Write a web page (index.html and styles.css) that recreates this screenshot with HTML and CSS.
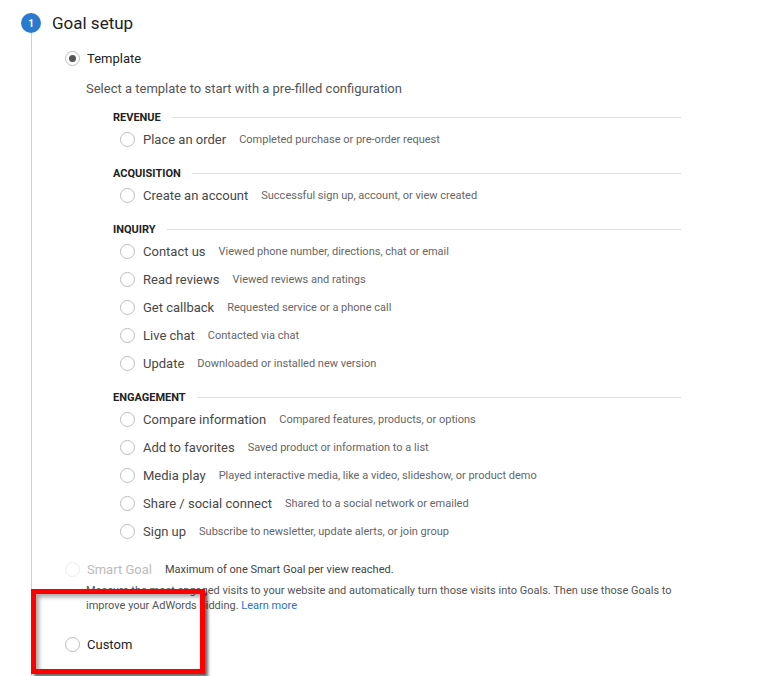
FILE: index.html
```html
<!DOCTYPE html>
<html lang="en">
<head>
  <meta charset="UTF-8">
  <title>Goal setup</title>
  <link rel="stylesheet" href="styles.css">
</head>
<body>
  <div class="page">
    <!-- step header -->
    <div class="step-head">
      <span class="step-num">1</span>
      <h1>Goal setup</h1>
    </div>

    <div class="step-body">
      <label class="option">
        <span class="radio checked"></span>
        <span class="option-name">Template</span>
      </label>
      <p class="hint">Select a template to start with a pre-filled configuration</p>

      <div class="groups">
        <section class="group">
          <h3>Revenue</h3>
          <div class="item"><span class="radio"></span><span class="item-name">Place an order</span><span class="item-desc">Completed purchase or pre-order request</span></div>
        </section>

        <section class="group">
          <h3>Acquisition</h3>
          <div class="item"><span class="radio"></span><span class="item-name">Create an account</span><span class="item-desc">Successful sign up, account, or view created</span></div>
        </section>

        <section class="group">
          <h3>Inquiry</h3>
          <div class="item"><span class="radio"></span><span class="item-name">Contact us</span><span class="item-desc">Viewed phone number, directions, chat or email</span></div>
          <div class="item"><span class="radio"></span><span class="item-name">Read reviews</span><span class="item-desc">Viewed reviews and ratings</span></div>
          <div class="item"><span class="radio"></span><span class="item-name">Get callback</span><span class="item-desc">Requested service or a phone call</span></div>
          <div class="item"><span class="radio"></span><span class="item-name">Live chat</span><span class="item-desc">Contacted via chat</span></div>
          <div class="item"><span class="radio"></span><span class="item-name">Update</span><span class="item-desc">Downloaded or installed new version</span></div>
        </section>

        <section class="group">
          <h3>Engagement</h3>
          <div class="item"><span class="radio"></span><span class="item-name">Compare information</span><span class="item-desc">Compared features, products, or options</span></div>
          <div class="item"><span class="radio"></span><span class="item-name">Add to favorites</span><span class="item-desc">Saved product or information to a list</span></div>
          <div class="item"><span class="radio"></span><span class="item-name">Media play</span><span class="item-desc">Played interactive media, like a video, slideshow, or product demo</span></div>
          <div class="item"><span class="radio"></span><span class="item-name">Share / social connect</span><span class="item-desc">Shared to a social network or emailed</span></div>
          <div class="item"><span class="radio"></span><span class="item-name">Sign up</span><span class="item-desc">Subscribe to newsletter, update alerts, or join group</span></div>
        </section>
      </div>

      <!-- smart goal (disabled) -->
      <div class="option smart">
        <span class="radio disabled"></span>
        <span class="option-name muted">Smart Goal</span>
        <span class="smart-note">Maximum of one Smart Goal per view reached.</span>
      </div>
      <p class="smart-text">Measure the most engaged visits to your website and automatically turn those visits into Goals. Then use those Goals to improve your AdWords bidding. <a href="#">Learn more</a></p>

      <label class="option custom">
        <span class="radio"></span>
        <span class="option-name">Custom</span>
      </label>
    </div>
  </div>

  <!-- red highlight box drawn over the page -->
  <div class="highlight"></div>
</body>
</html>
```

FILE: styles.css
```css
/* reset */
* { margin: 0; padding: 0; box-sizing: border-box; }
body {
  font-family: Roboto, "Liberation Sans", Arial, sans-serif;
  background-color: #fff;
  color: #333;
  width: 761px;
  height: 676px;
  overflow: hidden;
  position: relative;
}
.page {
  padding-top: 13px;
}
/* step header */
.step-head {
  display: flex;
  align-items: center;
  height: 20px;
  padding-left: 21px;
}
.step-num {
  width: 20px;
  height: 20px;
  border-radius: 50%;
  background-color: #2a7ad0;
  color: #fff;
  font-size: 10px;
  font-weight: bold;
  display: flex;
  align-items: center;
  justify-content: center;
}
.step-head h1 {
  margin-left: 11px;
  font-size: 17px;
  font-weight: normal;
  color: #222;
}
/* step body with the vertical line */
.step-body {
  margin-left: 31px;
  border-left: 1px solid #d0d0d0;
  padding-left: 33px;
  padding-top: 11px;
  height: 643px;
}
/* radios */
.radio {
  flex: none;
  width: 15px;
  height: 15px;
  border: 1px solid #bdbdbd;
  border-radius: 50%;
  display: flex;
  align-items: center;
  justify-content: center;
}
.radio.checked::after {
  content: "";
  width: 7px;
  height: 7px;
  border-radius: 50%;
  background-color: #555;
}
.radio.disabled {
  border-color: #ececec;
}
.option {
  display: flex;
  align-items: center;
  height: 28px;
}
.option-name {
  margin-left: 7px;
  font-size: 13px;
  color: #222;
}
.option-name.muted {
  color: #bbb;
}
.hint {
  margin-top: 9px;
  margin-left: 21px;
  font-size: 13px;
  line-height: 16px;
  color: #555;
}
/* template groups */
.groups {
  margin-left: 48px;
  width: 568px;
  margin-top: 12px;
}
.group + .group {
  margin-top: 12px;
}
.group h3 {
  display: flex;
  align-items: center;
  height: 16px;
  font-size: 11px;
  font-weight: bold;
  text-transform: uppercase;
  color: #222;
}
.group h3::after {
  content: "";
  flex: 1;
  height: 1px;
  margin-left: 11px;
  background-color: #e0e0e0;
}
.item {
  display: flex;
  align-items: center;
  height: 28px;
  padding-left: 7px;
}
.item-name {
  margin-left: 8px;
  font-size: 13px;
  color: #484848;
}
.item-desc {
  margin-left: 13px;
  font-size: 11px;
  color: #666;
  white-space: nowrap;
}
/* smart goal */
.smart {
  height: 22px;
  margin-top: 13px;
}
.smart-note {
  margin-left: 13px;
  font-size: 11px;
  color: #444;
}
.smart-text {
  margin-top: 3px;
  margin-left: 21px;
  width: 600px;
  font-size: 11px;
  line-height: 15px;
  color: #555;
}
.smart-text a {
  color: #2a6fc9;
  text-decoration: none;
}
.custom {
  margin-top: 17px;
}
/* red highlight */
.highlight {
  position: absolute;
  left: 31px;
  top: 589px;
  width: 174px;
  height: 85px;
  border: 5px solid #ff0000;
  box-shadow: 3px 3px 3px rgba(0, 0, 0, 0.6), inset 3px 3px 4px rgba(0, 0, 0, 0.35);
}
```
